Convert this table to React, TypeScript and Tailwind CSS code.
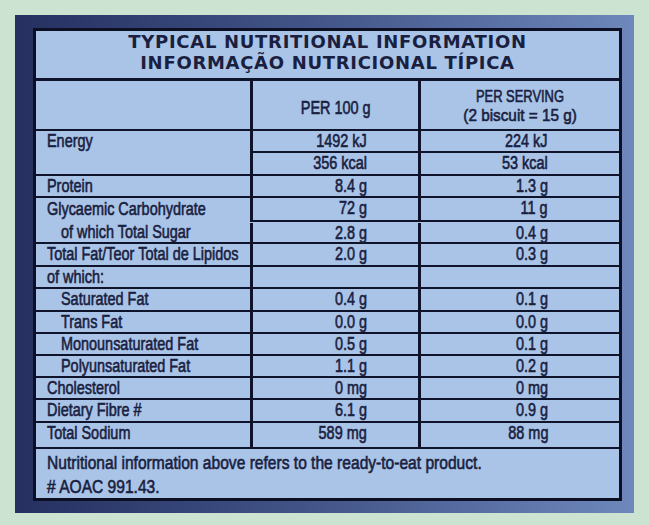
const body = { fontFamily: '"Liberation Sans", Arial, sans-serif' };
const head = { fontFamily: '"DejaVu Sans", "Open Sans", sans-serif' };

type Group = {
  labels: { text: string; indent?: boolean }[];
  rows: { a: string; b: string; h: string }[];
};

const groups: Group[] = [
  {
    labels: [{ text: 'Energy' }],
    rows: [
      { a: '1492 kJ', b: '224 kJ', h: 'h-[22px]' },
      { a: '356 kcal', b: '53 kcal', h: 'h-[23px]' },
    ],
  },
  { labels: [{ text: 'Protein' }], rows: [{ a: '8.4 g', b: '1.3 g', h: 'h-[22px]' }] },
  {
    labels: [{ text: 'Glycaemic Carbohydrate' }, { text: 'of which Total Sugar', indent: true }],
    rows: [
      { a: '72 g', b: '11 g', h: 'h-[24px]' },
      { a: '2.8 g', b: '0.4 g', h: 'h-[21px]' },
    ],
  },
  { labels: [{ text: 'Total Fat/Teor Total de Lipidos' }], rows: [{ a: '2.0 g', b: '0.3 g', h: 'h-[23px]' }] },
  { labels: [{ text: 'of which:' }], rows: [{ a: '', b: '', h: 'h-[22px]' }] },
  { labels: [{ text: 'Saturated Fat', indent: true }], rows: [{ a: '0.4 g', b: '0.1 g', h: 'h-[23px]' }] },
  { labels: [{ text: 'Trans Fat', indent: true }], rows: [{ a: '0.0 g', b: '0.0 g', h: 'h-[22px]' }] },
  { labels: [{ text: 'Monounsaturated Fat', indent: true }], rows: [{ a: '0.5 g', b: '0.1 g', h: 'h-[22px]' }] },
  { labels: [{ text: 'Polyunsaturated Fat', indent: true }], rows: [{ a: '1.1 g', b: '0.2 g', h: 'h-[22px]' }] },
  { labels: [{ text: 'Cholesterol' }], rows: [{ a: '0 mg', b: '0 mg', h: 'h-[22px]' }] },
  { labels: [{ text: 'Dietary Fibre #' }], rows: [{ a: '6.1 g', b: '0.9 g', h: 'h-[23px]' }] },
  { labels: [{ text: 'Total Sodium' }], rows: [{ a: '589 mg', b: '88 mg', h: 'h-[26px]' }] },
];

// condensed text: Liberation Sans squeezed horizontally, like the label's condensed face
function Narrow({
  children,
  origin = 'left',
  squeeze = 'scale-x-[0.78]',
}: {
  children: React.ReactNode;
  origin?: 'left' | 'right' | 'center';
  squeeze?: string;
}) {
  const o = origin === 'left' ? 'origin-left' : origin === 'right' ? 'origin-right' : 'origin-center';
  return <span className={`inline-block whitespace-nowrap ${squeeze} ${o}`}>{children}</span>;
}

function NutritionRows() {
  return (
    <>
      {groups.map((g) => (
        <div key={g.labels[0].text} className="contents">
          <div
            className={`${g.rows.length === 2 ? 'row-span-2' : ''} border-b-2 border-[#10142a] pl-[11px] text-[18.5px] leading-[20px]`}
          >
            {g.labels.map((l, i) => (
              <div key={l.text} className={`${l.indent ? 'pl-[14px]' : ''} ${i === 0 && g.labels.length === 2 ? 'h-[24px] leading-[22px]' : ''}`}>
                <Narrow>{l.text}</Narrow>
              </div>
            ))}
          </div>
          {g.rows.map((r, i) => (
            <div key={i} className="contents">
              <div className={`${r.h} ${i === 0 ? 'col-start-2' : ''} border-b-2 border-l-[3px] border-[#10142a] pr-[51px] text-right text-[18.5px] leading-[20px]`}>
                <Narrow origin="right">{r.a}</Narrow>
              </div>
              <div className={`${r.h} border-b-2 border-l-[3px] border-[#10142a] pr-[71px] text-right text-[18.5px] leading-[20px]`}>
                <Narrow origin="right">{r.b}</Narrow>
              </div>
            </div>
          ))}
        </div>
      ))}
    </>
  );
}

export default function App() {
  return (
    <div className="min-h-screen w-full bg-[#cce3d1] px-[15px] pt-[15px] pb-[13px]">
      <div className="bg-linear-to-r from-[#253060] via-[#44568a] to-[#6e88bc] pt-[13px] pr-[12px] pb-[12px] pl-[18px]">
        <div
          className="border-[3px] border-[#0d1022] bg-[#a9c4e6] text-[#19203f] [-webkit-text-stroke:0.6px_#19203f]"
          style={body}
        >
          <div className="grid grid-cols-[214px_168px_1fr]">
            <div
              className="col-span-3 flex h-[50px] flex-col items-center border-b-[3px] border-[#10142a] text-[18px] leading-[21px] font-bold tracking-[0.7px] [-webkit-text-stroke:0px]"
              style={head}
            >
              <div>TYPICAL NUTRITIONAL INFORMATION</div>
              <div>INFORMAÇÃO NUTRICIONAL TÍPICA</div>
            </div>
            <div className="h-[50px] border-b-2 border-[#10142a]" />
            <div className="flex h-[50px] items-center justify-center border-b-2 border-l-[3px] border-[#10142a] pt-[5px] text-[18.5px] leading-[20px]">
              <Narrow origin="center">PER 100 g</Narrow>
            </div>
            <div className="flex h-[50px] flex-col items-center justify-center border-b-2 border-l-[3px] border-[#10142a] pt-[1px] text-[17px] leading-[19px]">
              <Narrow origin="center" squeeze="scale-x-[0.76]">
                PER SERVING
              </Narrow>
              <Narrow origin="center" squeeze="scale-x-[0.9]">
                (2 biscuit = 15 g)
              </Narrow>
            </div>
            <NutritionRows />
          </div>
          <div className="h-[49px] pt-[2px] pl-[11px] text-[19px] leading-[24px]">
            <div>
              <Narrow squeeze="scale-x-[0.82]">Nutritional information above refers to the ready-to-eat product.</Narrow>
            </div>
            <div>
              <Narrow squeeze="scale-x-[0.82]"># AOAC 991.43.</Narrow>
            </div>
          </div>
        </div>
      </div>
    </div>
  );
}
